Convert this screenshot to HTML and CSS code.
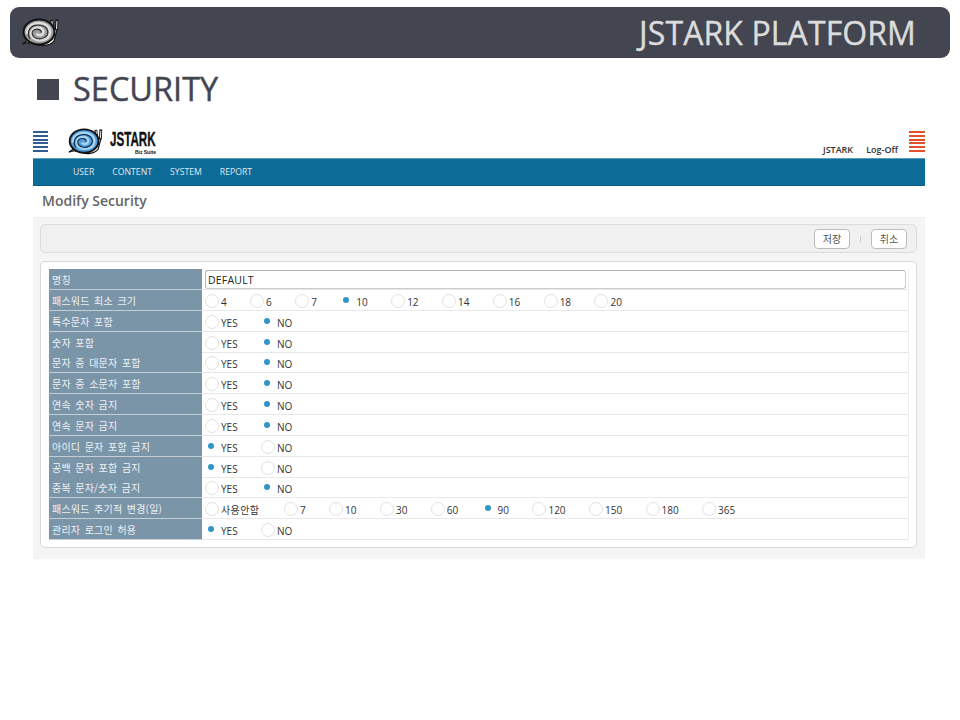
FILE: index.html
```html
<!DOCTYPE html>
<html lang="ko">
<head>
<meta charset="utf-8">
<title>JSTARK Platform - Security</title>
<link rel="stylesheet" href="styles.css">
</head>
<body>
<svg class="defs" width="0" height="0" aria-hidden="true">
  <symbol id="snail" viewBox="0 0 37 29">
    <path d="M0.5 26 C5 24 9 24 13 26 C19 28.5 28 28 32 23 L35 12 L31 11 L26 24 L6 22 Z" fill="#f0f0f0" stroke="#111" stroke-width="1.2"/>
    <path d="M31 12 L29.5 2 M34.5 12 L35 1.5" stroke="#111" stroke-width="3" fill="none"/>
    <path d="M31 11 L29.8 3 M34.5 11 L35 3" stroke="#eee" stroke-width="1.1" fill="none"/>
    <ellipse cx="17" cy="14" rx="15.5" ry="12.5" fill="var(--shell)" stroke="#111" stroke-width="2"/>
    <path d="M5 16 C4 8 13 4 20 5.5 C27 7 30 13 27 18 C24 23 14 23.5 10.5 19.5 C7.5 15.5 10 10 15.5 9.5 C20 9.5 22.5 12.5 21 15.5 C19.5 18 15.5 17.5 14.5 15.5" fill="none" stroke="var(--spiral)" stroke-width="2.6"/>
    <path d="M8 21 C4.5 15 7 9 13 7.4 C19 6 25.5 8.5 25.8 14 C26 19 20 21.8 15 20.5 C10 19 8.5 14 12.5 11.8 C16 10.2 19.5 12 19.2 14.6" fill="none" stroke="var(--line)" stroke-width="1.1"/>
  </symbol>
</svg>

<header class="slide-bar">
  <svg class="snail snail-grey"><use href="#snail"/></svg>
  <div class="slide-name">JSTARK PLATFORM</div>
</header>

<h1 class="slide-title"><span class="title-mark"></span><span class="title-text">SECURITY</span></h1>

<main class="screen">
  <div class="topbar">
    <div class="burger burger-blue"><i></i><i></i><i></i><i></i><i></i><i></i></div>
    <svg class="snail snail-blue"><use href="#snail"/></svg>
    <div class="brand">
      <div class="brand-name">JSTARK</div>
      <div class="brand-sub">Biz Suite</div>
    </div>
    <div class="user-links"><span>JSTARK</span><span>Log-Off</span></div>
    <div class="burger burger-red"><i></i><i></i><i></i><i></i><i></i><i></i></div>
  </div>

  <nav class="menu">
    <span>USER</span><span>CONTENT</span><span>SYSTEM</span><span>REPORT</span>
  </nav>

  <h2 class="page-title">Modify Security</h2>

  <section class="panel">
    <div class="toolbar">
      <button class="btn" type="button">저장</button>
      <span class="btn-sep"></span>
      <button class="btn" type="button">취소</button>
    </div>

    <div class="card">
      <div class="form-table">
        <div class="row"><div class="label">명칭</div><div class="value"><div class="text-input">DEFAULT</div></div></div>

        <div class="row"><div class="label">패스워드 최소 크기</div><div class="value">
          <span class="opt">4</span><span class="opt">6</span><span class="opt">7</span><span class="opt on">10</span><span class="opt">12</span><span class="opt">14</span><span class="opt">16</span><span class="opt">18</span><span class="opt">20</span>
        </div></div>

        <div class="row"><div class="label">특수문자 포함</div><div class="value"><span class="opt">YES</span><span class="opt on">NO</span></div></div>
        <div class="row"><div class="label">숫자 포함</div><div class="value"><span class="opt">YES</span><span class="opt on">NO</span></div></div>
        <div class="row"><div class="label">문자 중 대문자 포함</div><div class="value"><span class="opt">YES</span><span class="opt on">NO</span></div></div>
        <div class="row"><div class="label">문자 중 소문자 포함</div><div class="value"><span class="opt">YES</span><span class="opt on">NO</span></div></div>
        <div class="row"><div class="label">연속 숫자 금지</div><div class="value"><span class="opt">YES</span><span class="opt on">NO</span></div></div>
        <div class="row"><div class="label">연속 문자 금지</div><div class="value"><span class="opt">YES</span><span class="opt on">NO</span></div></div>
        <div class="row"><div class="label">아이디 문자 포함 금지</div><div class="value"><span class="opt on">YES</span><span class="opt">NO</span></div></div>
        <div class="row"><div class="label">공백 문자 포함 금지</div><div class="value"><span class="opt on">YES</span><span class="opt">NO</span></div></div>
        <div class="row"><div class="label">중복 문자/숫자 금지</div><div class="value"><span class="opt">YES</span><span class="opt on">NO</span></div></div>

        <div class="row"><div class="label">패스워드 주기적 변경(일)</div><div class="value">
          <span class="opt opt-ko">사용안함</span><span class="opt">7</span><span class="opt">10</span><span class="opt">30</span><span class="opt">60</span><span class="opt on">90</span><span class="opt">120</span><span class="opt">150</span><span class="opt">180</span><span class="opt">365</span>
        </div></div>

        <div class="row"><div class="label">관리자 로그인 허용</div><div class="value"><span class="opt on">YES</span><span class="opt">NO</span></div></div>
      </div>
    </div>
  </section>
</main>
</body>
</html>
```

FILE: styles.css
```css
* { box-sizing: border-box; }

html, body { margin: 0; padding: 0; background: #fff; }

body {
  width: 960px;
  height: 720px;
  overflow: hidden;
  font-family: "Open Sans", "Noto Sans CJK KR", sans-serif;
  color: #333;
}

.defs { position: absolute; }

.slide-bar {
  display: flex;
  align-items: center;
  justify-content: space-between;
  height: 51px;
  margin: 7px 10px 0;
  padding: 0 34px 0 12px;
  background: #434550;
  border-radius: 9px;
}

.snail { display: block; flex: none; }

.snail-grey {
  width: 37px;
  height: 29px;
  margin-top: -1px;
  --shell: #9c9c9c;
  --spiral: #dedede;
  --line: #2a2a2a;
}

.slide-name {
  font-size: 32px;
  letter-spacing: 0.1px;
  line-height: 51px;
  color: #dcdcdc;
  -webkit-text-stroke: 0.4px #dcdcdc;
}

.slide-title {
  display: flex;
  align-items: center;
  gap: 14px;
  height: 46px;
  margin: 8px 0 13px;
  padding-left: 37px;
  font-size: 32.5px;
  font-weight: 400;
  color: #434550;
}

.title-mark {
  width: 22px;
  height: 21px;
  background: #434550;
}

.title-text {
  margin-top: -2px;
  -webkit-text-stroke: 0.4px #434550;
}

.screen {
  width: 892px;
  margin-left: 33px;
}

.topbar {
  display: flex;
  align-items: flex-start;
  height: 33px;
}

.burger {
  display: flex;
  flex-direction: column;
  gap: 1.8px;
  width: 16px;
  margin-top: 6px;
  flex: none;
}

.burger i { display: block; height: 2px; }
.burger-blue { width: 15px; }
.burger-blue i { background: #2f5d94; }
.burger-red i { background: #e2522a; }

.snail-blue {
  width: 35px;
  height: 27px;
  margin: 3px 0 0 20px;
  --shell: #4f9ddc;
  --spiral: #a9d3f2;
  --line: #12283c;
}

.brand {
  width: 46px;
  margin: 6px 0 0 7px;
  color: #111;
  font-family: "Liberation Sans", sans-serif;
  font-weight: 700;
}

.brand-name {
  display: inline-block;
  font-size: 20px;
  line-height: 16px;
  -webkit-text-stroke: 0.4px #111;
  transform: scaleX(0.58);
  transform-origin: left center;
  vertical-align: top;
}

.brand-sub {
  font-size: 5px;
  line-height: 6px;
  text-align: right;
}

.user-links {
  display: flex;
  gap: 13px;
  margin: 18px 11px 0 auto;
  font-size: 9px;
  line-height: 14px;
  font-weight: 600;
  color: #333;
}

.menu {
  display: flex;
  align-items: center;
  gap: 18px;
  height: 28px;
  padding-left: 40px;
  background: #0c6b97;
  border-top: 1px solid #5a9db8;
  border-bottom: 1px solid #0a5f87;
  font-size: 8.7px;
  color: #e0e8ee;
}

.page-title {
  height: 31px;
  margin: 0;
  padding-left: 9px;
  font-size: 14px;
  line-height: 30px;
  font-weight: 600;
  color: #666;
}

.panel {
  height: 342px;
  padding: 6px 8px 0 7px;
  background: #f5f5f5;
  border-top: 1px solid #eeeeee;
}

.toolbar {
  display: flex;
  align-items: center;
  justify-content: flex-end;
  height: 29px;
  padding-right: 9px;
  background: #f0f0f0;
  border: 1px solid #dcdcdc;
  border-radius: 5px;
}

.btn {
  width: 36px;
  height: 20px;
  padding: 0;
  font-family: "Noto Sans CJK KR", sans-serif;
  font-size: 10px;
  color: #555;
  background: #fff;
  border: 1px solid #bdbdb5;
  border-radius: 4px;
}

.btn-sep {
  width: 1px;
  height: 6px;
  margin: 0 10px;
  background: #ccc;
}

.card {
  height: 287px;
  margin-top: 8px;
  padding: 7px 7px 0 8px;
  background: #fff;
  border: 1px solid #d8d8d8;
  border-radius: 5px;
}

.form-table {
  display: grid;
  grid-auto-rows: 20.85px;
  width: 860px;
}

.row {
  display: grid;
  grid-template-columns: 153px 1fr;
}

.label {
  padding: 1px 0 0 3px;
  font-family: "Noto Sans CJK KR", sans-serif;
  font-size: 10px;
  line-height: 19px;
  letter-spacing: 0.2px;
  word-spacing: 1.5px;
  color: #eef2f5;
  background: #7a94a8;
  border-bottom: 1px solid #c3ced7;
  white-space: nowrap;
}

.value {
  display: flex;
  align-items: center;
  padding-left: 3px;
  border-bottom: 1px solid #e8e8e8;
  border-right: 1px solid #eeeeee;
}

.text-input {
  width: 701px;
  height: 19px;
  padding-left: 2px;
  font-size: 10.5px;
  line-height: 18px;
  letter-spacing: 0.2px;
  color: #222;
  background: #fff;
  border: 1px solid #cccccc;
  border-top-color: #b4b4b4;
  border-left-color: #b4b4b4;
  border-radius: 3px;
}

.opt {
  position: relative;
  display: flex;
  align-items: center;
  margin-top: 2px;
  padding: 2px 0 0 16px;
  margin-right: 23.4px;
  font-family: "Open Sans", "Noto Sans CJK KR", sans-serif;
  font-size: 10px;
  line-height: 14px;
  color: #333;
  white-space: nowrap;
}

.opt-ko { letter-spacing: 0.4px; margin-right: 24.6px; }

.opt::before {
  content: "";
  position: absolute;
  left: 0;
  top: 1px;
  width: 12px;
  height: 12px;
  background: #fff;
  border: 1px solid #e2e2e2;
  border-radius: 50%;
}

.opt.on::before {
  left: 3px;
  top: 4px;
  width: 6px;
  height: 6px;
  background: #2f96c8;
  border: 0;
  box-shadow: 0 0 0 3px #fff;
}
```
